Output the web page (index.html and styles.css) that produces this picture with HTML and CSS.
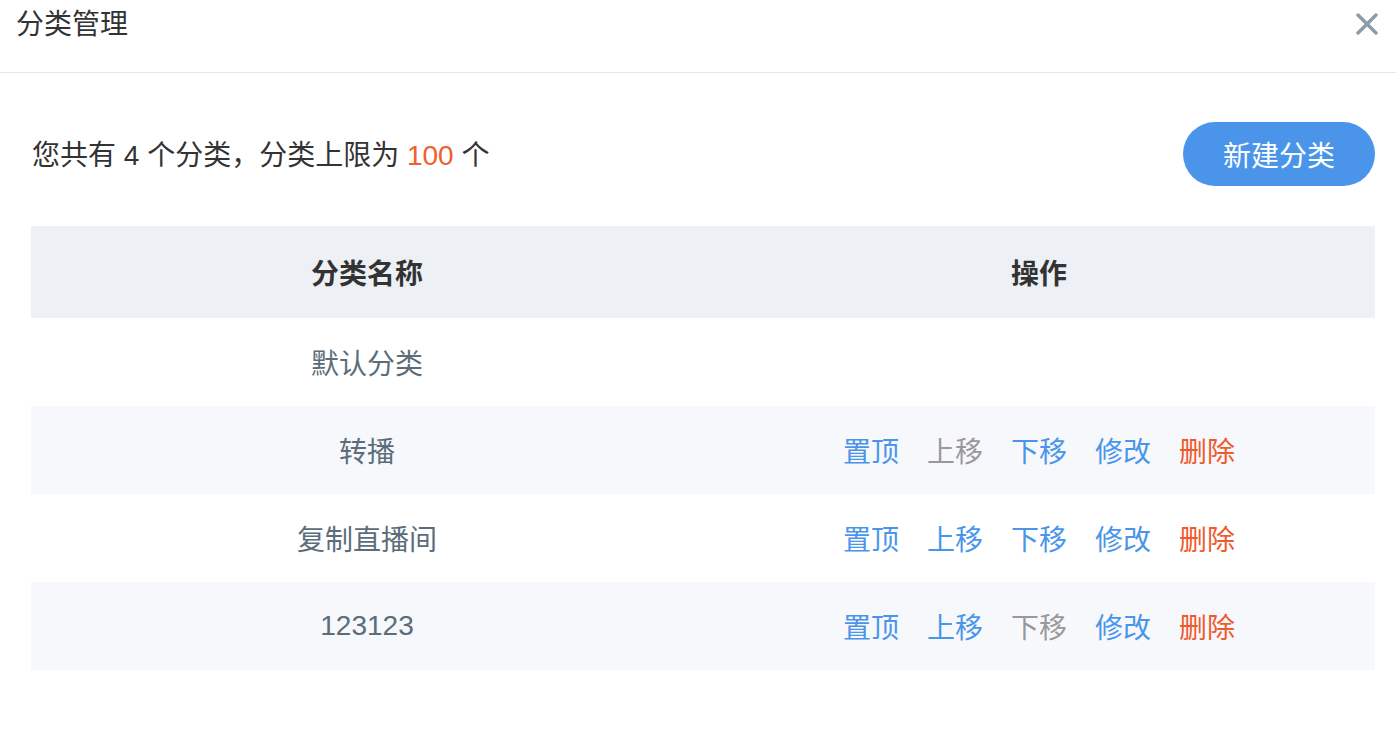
FILE: index.html
```html
<!DOCTYPE html>
<html>
<head>
<meta charset="utf-8">
<link rel="stylesheet" href="styles.css">
<title>分类管理</title>
</head>
<body>
	<div class="dialog">
		<div class="dialog-header">
			<span class="dialog-title">分类管理</span>
			<button class="close" title="关闭">
				<svg width="22" height="22" viewBox="0 0 22 22"><path d="M2 2 L20 20 M20 2 L2 20" stroke="#8d9ba6" stroke-width="3.4" stroke-linecap="round"/></svg>
			</button>
		</div>
		<div class="dialog-body">
			<div class="summary">
				<p>您共有 4 个分类，分类上限为 <span class="limit">100</span> 个</p>
				<button class="btn-primary">新建分类</button>
			</div>
			<table class="cat-table">
				<tr><th>分类名称</th><th>操作</th></tr>
				<tr><td class="name">默认分类</td><td></td></tr>
				<tr>
					<td class="name">转播</td>
					<td class="ops"><a>置顶</a><a class="off">上移</a><a>下移</a><a>修改</a><a class="del">删除</a></td>
				</tr>
				<tr>
					<td class="name">复制直播间</td>
					<td class="ops"><a>置顶</a><a>上移</a><a>下移</a><a>修改</a><a class="del">删除</a></td>
				</tr>
				<tr>
					<td class="name">123123</td>
					<td class="ops"><a>置顶</a><a>上移</a><a class="off">下移</a><a>修改</a><a class="del">删除</a></td>
				</tr>
			</table>
		</div>
	</div>
</body>
</html>
```

FILE: styles.css
```css
body {
  margin: 0;
  background: #fff;
  font-family: "Liberation Sans", "Noto Sans CJK SC", sans-serif;
  font-size: 28px;
  color: #333;
}

.dialog-header {
  height: 72px;
  border-bottom: 1px solid #e8e8e8;
  padding: 0 16px;
  display: flex;
  justify-content: space-between;
  align-items: flex-start;
}

.dialog-title {
  line-height: 50px;
  color: #333;
}

.close {
  border: 0;
  background: none;
  padding: 0;
  margin-top: 13px;
  margin-right: 2px;
  width: 22px;
  height: 22px;
  cursor: pointer;
}

.dialog-body {
  padding: 49px 21px 0 31px;
}

.summary {
  display: flex;
  justify-content: space-between;
  align-items: center;
  height: 64px;
  margin-bottom: 40px;
}

.summary p {
  margin: 3px 0 0 1px;
  line-height: 40px;
}

.limit {
  color: #f0602e;
}

.btn-primary {
  width: 192px;
  height: 64px;
  border: 0;
  border-radius: 32px;
  background: #4a95ea;
  color: #fff;
  font-family: inherit;
  font-size: 28px;
  cursor: pointer;
}

.cat-table {
  width: 100%;
  border-collapse: collapse;
  table-layout: fixed;
}

.cat-table th {
  height: 92px;
  padding: 0;
  background: #edf0f4;
  font-weight: bold;
  color: #333;
}

.cat-table td {
  height: 88px;
  padding: 0;
  text-align: center;
}

.cat-table tr:nth-child(odd) td {
  background: #f6f8fb;
}

.name {
  color: #5b6d7a;
}

.ops a {
  color: #4a95ea;
  margin: 0 14px;
  cursor: pointer;
}

.ops a.off {
  color: #999;
}

.ops a.del {
  color: #f05a2c;
}
```
